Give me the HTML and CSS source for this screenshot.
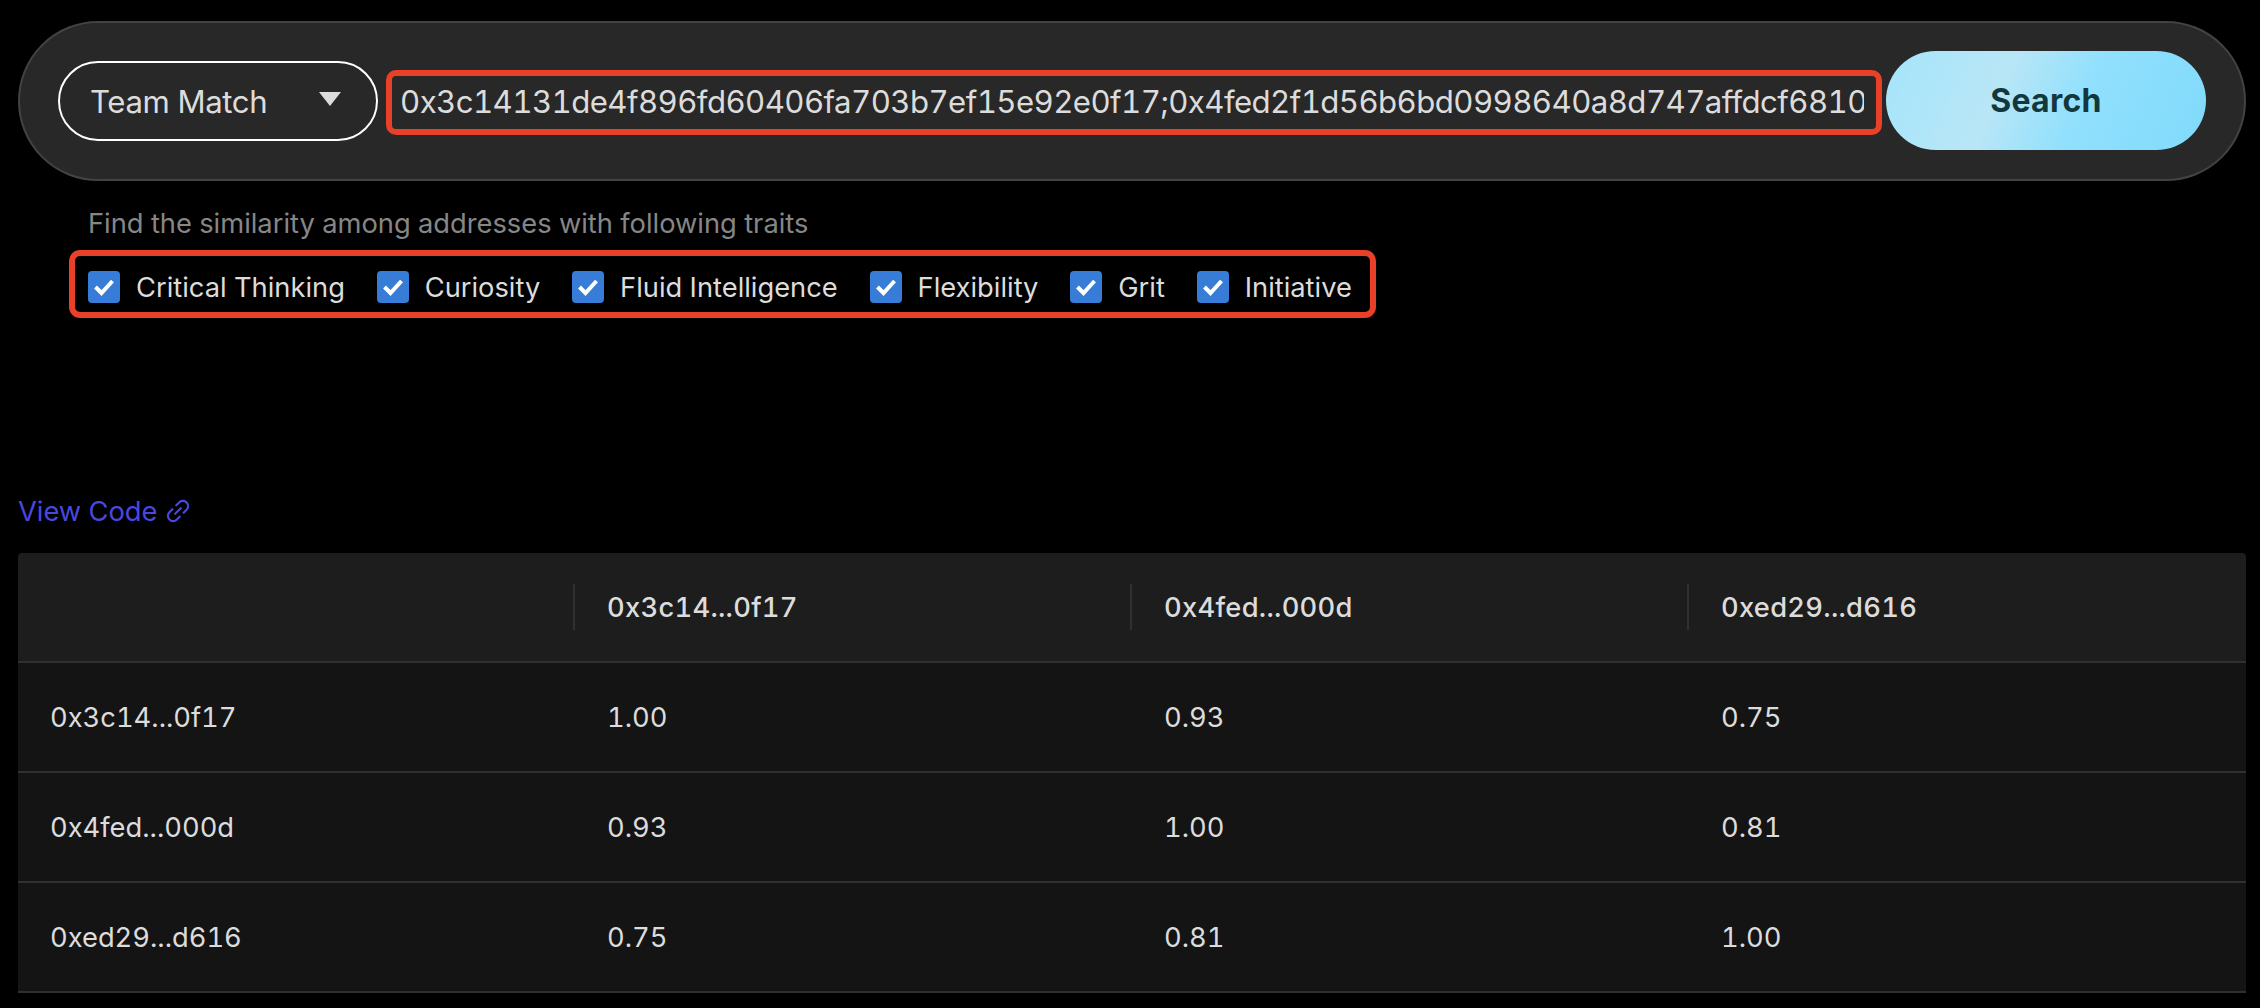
FILE: index.html
```html
<!DOCTYPE html>
<html lang="en">
<head>
<meta charset="utf-8">
<title>Team Match</title>
<link rel="stylesheet" href="styles.css">
</head>
<body>
<main class="page">
  <form class="search-bar">
    <div class="select">
      <span class="select-label">Team Match</span>
      <svg class="caret" width="22" height="14" viewBox="0 0 22 14"><path d="M0 0H22L11 14Z" fill="#dcdcdc"/></svg>
    </div>
    <div class="address-field"><span class="address-text">0x3c14131de4f896fd60406fa703b7ef15e92e0f17;0x4fed2f1d56b6bd0998640a8d747affdcf6810</span></div>
    <button class="search-button" type="button">Search</button>
  </form>
  <p class="hint">Find the similarity among addresses with following traits</p>
  <div class="traits">
    <label class="trait"><svg class="check" viewBox="0 0 32 32"><path d="M7.500 16L13.500 22L24.500 10"/></svg><span>Critical Thinking</span></label>
    <label class="trait"><svg class="check" viewBox="0 0 32 32"><path d="M7.500 16L13.500 22L24.500 10"/></svg><span>Curiosity</span></label>
    <label class="trait"><svg class="check" viewBox="0 0 32 32"><path d="M7.500 16L13.500 22L24.500 10"/></svg><span>Fluid Intelligence</span></label>
    <label class="trait"><svg class="check" viewBox="0 0 32 32"><path d="M7.500 16L13.500 22L24.500 10"/></svg><span>Flexibility</span></label>
    <label class="trait"><svg class="check" viewBox="0 0 32 32"><path d="M7.500 16L13.500 22L24.500 10"/></svg><span>Grit</span></label>
    <label class="trait"><svg class="check" viewBox="0 0 32 32"><path d="M7.500 16L13.500 22L24.500 10"/></svg><span>Initiative</span></label>
  </div>
  <a class="code-link"><span>View Code</span>
    <svg class="link-icon" viewBox="64 64 896 896" fill="currentColor"><path d="M574 665.4a8.03 8.03 0 00-11.3 0L446.5 781.6c-53.8 53.8-144.6 59.5-204 0-59.5-59.5-53.8-150.2 0-204l116.2-116.2c3.100-3.100 3.100-8.200 0-11.300l-39.800-39.800a8.030 8.030 0 00-11.300 0L191.400 526.500c-84.600 84.600-84.600 221.500 0 306s221.500 84.600 306 0l116.200-116.200c3.100-3.100 3.100-8.200 0-11.300L574 665.400zm258.600-474c-84.600-84.600-221.500-84.600-306 0L410.300 307.600a8.030 8.030 0 000 11.300l39.700 39.700c3.100 3.100 8.200 3.100 11.300 0l116.200-116.200c53.800-53.800 144.600-59.500 204 0 59.500 59.500 53.800 150.200 0 204L665.300 562.600a8.030 8.030 0 000 11.300l39.800 39.800c3.100 3.100 8.200 3.100 11.300 0l116.200-116.200c84.500-84.600 84.500-221.500 0-306.100zM610.100 372.300a8.030 8.030 0 00-11.300 0L372.300 598.700a8.030 8.030 0 000 11.300l39.600 39.600c3.100 3.100 8.200 3.100 11.300 0l226.400-226.400c3.100-3.100 3.100-8.200 0-11.300l-39.500-39.600z"/></svg>
  </a>
  <table class="matrix">
    <thead><tr><th></th><th>0x3c14...0f17</th><th>0x4fed...000d</th><th>0xed29...d616</th></tr></thead>
    <tbody>
      <tr><td>0x3c14...0f17</td><td>1.00</td><td>0.93</td><td>0.75</td></tr>
      <tr><td>0x4fed...000d</td><td>0.93</td><td>1.00</td><td>0.81</td></tr>
      <tr><td>0xed29...d616</td><td>0.75</td><td>0.81</td><td>1.00</td></tr>
    </tbody>
  </table>
</main>
</body>
</html>
```
FILE: styles.css
```css
* { box-sizing: border-box; }
body {
  margin: 0;
  background: #000;
  color: #dcdcdc;
  font-family: Inter, "Liberation Sans", sans-serif;
  font-size: 27.3px;
  font-variant-numeric: tabular-nums;
}
.page { padding: 21px 14px 0 18px; }
.search-bar {
  display: flex;
  align-items: center;
  height: 160px;
  padding: 0 38px;
  border: 2px solid #434343;
  border-radius: 80px;
  background: #282828;
}
.select {
  display: flex;
  align-items: center;
  justify-content: space-between;
  width: 320px;
  height: 80px;
  padding: 0 35px 0 30px;
  border: 2px solid #fff;
  border-radius: 40px;
  font-size: 31.2px;
  letter-spacing: -0.4px;
}
.select-label { padding-top: 2px; }
.caret { margin-top: -5px; }
.address-field {
  width: 1496px;
  height: 65px;
  margin: 2px 4px 0 8px;
  padding: 0 12px 0 8px;
  border: 6px solid #e84127;
  border-radius: 10px;
  font-size: 31.2px;
  letter-spacing: -0.58px;
  line-height: 53px;
}
.address-text {
  display: block;
  overflow: hidden;
  white-space: nowrap;
}
.search-button {
  width: 320px;
  height: 99px;
  margin-top: -1px;
  padding: 0;
  border: 0;
  border-radius: 50px;
  background: linear-gradient(115deg, #a5e5fb 0%, #b8e6f6 36%, #91e0fd 60%, #80dafb 100%);
  color: #12383d;
  font: 750 32px Inter, sans-serif;
  letter-spacing: 0.3px;
}
.hint { margin: 26px 0 0 70px; color: #868686; line-height: 34px; white-space: nowrap; }
.traits {
  display: flex;
  align-items: center;
  width: 1307px;
  height: 68px;
  margin: 9px 0 0 51px;
  padding: 6px 0 0 13px;
  border: 6px solid #e84127;
  border-radius: 11px;
}
.trait { display: flex; align-items: center; gap: 16px; white-space: nowrap; margin-right: 31.800px; }
.check { width: 32px; height: 32px; border-radius: 4px; background: #377dd8; flex: none; }
.check path { fill: none; stroke: #fff; stroke-width: 4; }
.code-link { display: flex; align-items: center; gap: 8px; height: 40px; margin-top: 173px; color: #4a47df; }
.link-icon { width: 26px; height: 26px; }
.matrix {
  width: 2228px;
  margin-top: 22px;
  border-collapse: separate;
  border-spacing: 0;
  table-layout: fixed;
}
.matrix th, .matrix td {
  height: 110px;
  padding: 0 32px;
  border-bottom: 2px solid #303030;
  background: #141414;
  text-align: left;
  font-weight: 400;
}
.matrix th { position: relative; background: #1d1d1d; font-weight: 500; letter-spacing: 0.28px; }
.matrix th:first-child { border-top-left-radius: 4px; }
.matrix th:last-child { border-top-right-radius: 4px; }
.matrix th:not(:last-child)::after {
  content: "";
  position: absolute;
  right: 0;
  top: 31px;
  width: 2px;
  height: 46px;
  background: #303030;
}
```
